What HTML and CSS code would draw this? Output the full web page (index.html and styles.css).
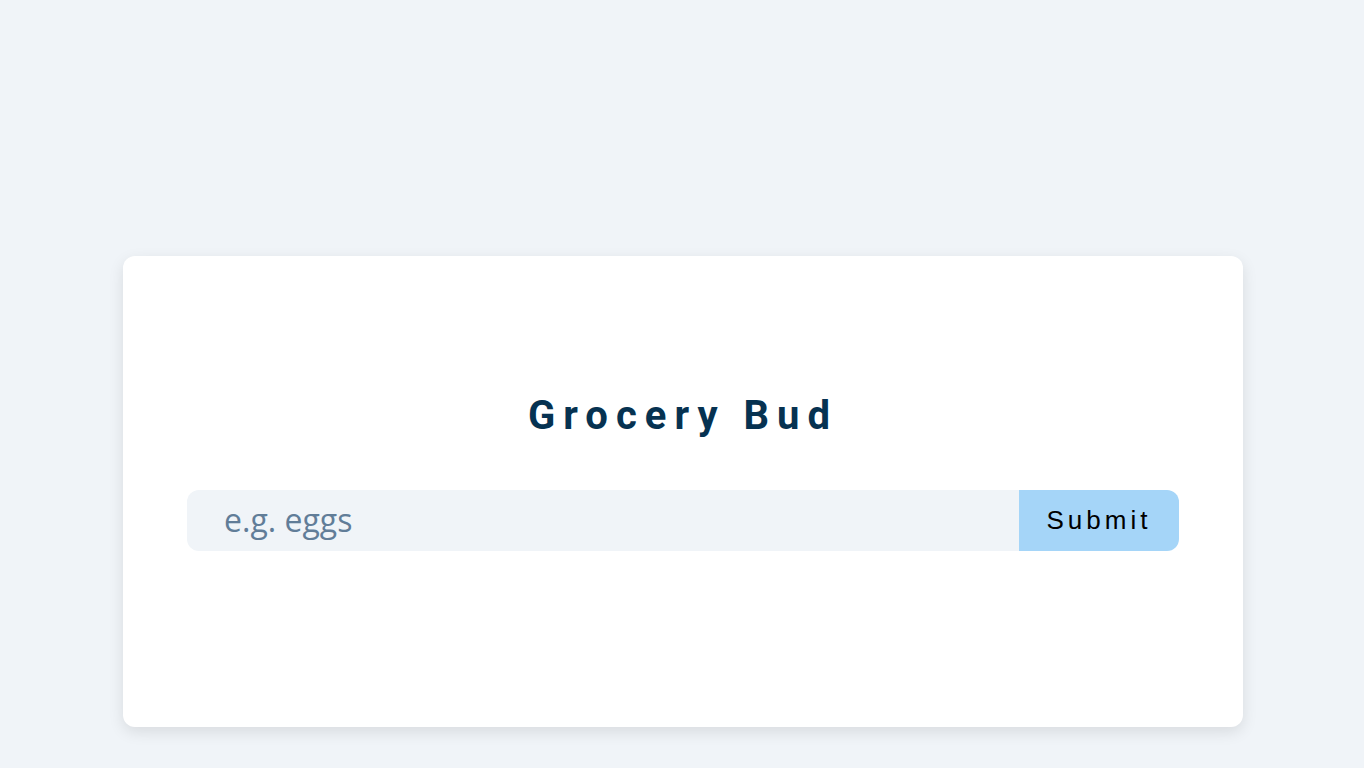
FILE: index.html
```html
<!DOCTYPE html>
<html lang="en">
<head>
<meta charset="utf-8">
<title>Grocery Bud</title>
<link rel="stylesheet" href="styles.css">
</head>
<body>
<main class="page">
  <section class="card">
    <h1 class="title">Grocery Bud</h1>
    <form class="form">
      <input class="input" type="text" placeholder="e.g. eggs">
      <button class="submit" type="button">Submit</button>
    </form>
  </section>
</main>
</body>
</html>
```
FILE: styles.css
```css
* { box-sizing: border-box; }
html, body { margin: 0; padding: 0; }
body {
  background: #f0f4f8;
  font-family: "Open Sans", sans-serif;
  min-height: 768px;
}
.page {
  padding-top: 256px;
  padding-left: 2px;
  display: flex;
  justify-content: center;
}
.card {
  width: 1120px;
  background: #ffffff;
  border-radius: 12px;
  box-shadow: 0 5px 15px rgba(0, 0, 0, 0.1);
  padding: 132px 64px 176px;
}
.title {
  margin: 0 0 46px;
  font-family: Roboto, sans-serif;
  font-weight: 700;
  font-size: 40px;
  line-height: 56px;
  letter-spacing: 8px;
  color: #063251;
  text-align: center;
}
.form {
  display: flex;
  height: 61px;
}
.input {
  flex: 1;
  min-width: 0;
  border: none;
  outline: none;
  background: #f0f4f8;
  border-radius: 12px 0 0 12px;
  padding: 0 0 2px 37px;
  font-family: "Open Sans", sans-serif;
  font-size: 32px;
  color: #102a42;
}
.input::placeholder {
  color: #617d98;
}
.submit {
  width: 160px;
  border: none;
  background: #a5d5f8;
  border-radius: 0 12px 12px 0;
  font-family: "Liberation Sans", Arial, sans-serif;
  font-size: 26px;
  letter-spacing: 4px;
  color: #000000;
  padding: 0;
  cursor: pointer;
}
```
